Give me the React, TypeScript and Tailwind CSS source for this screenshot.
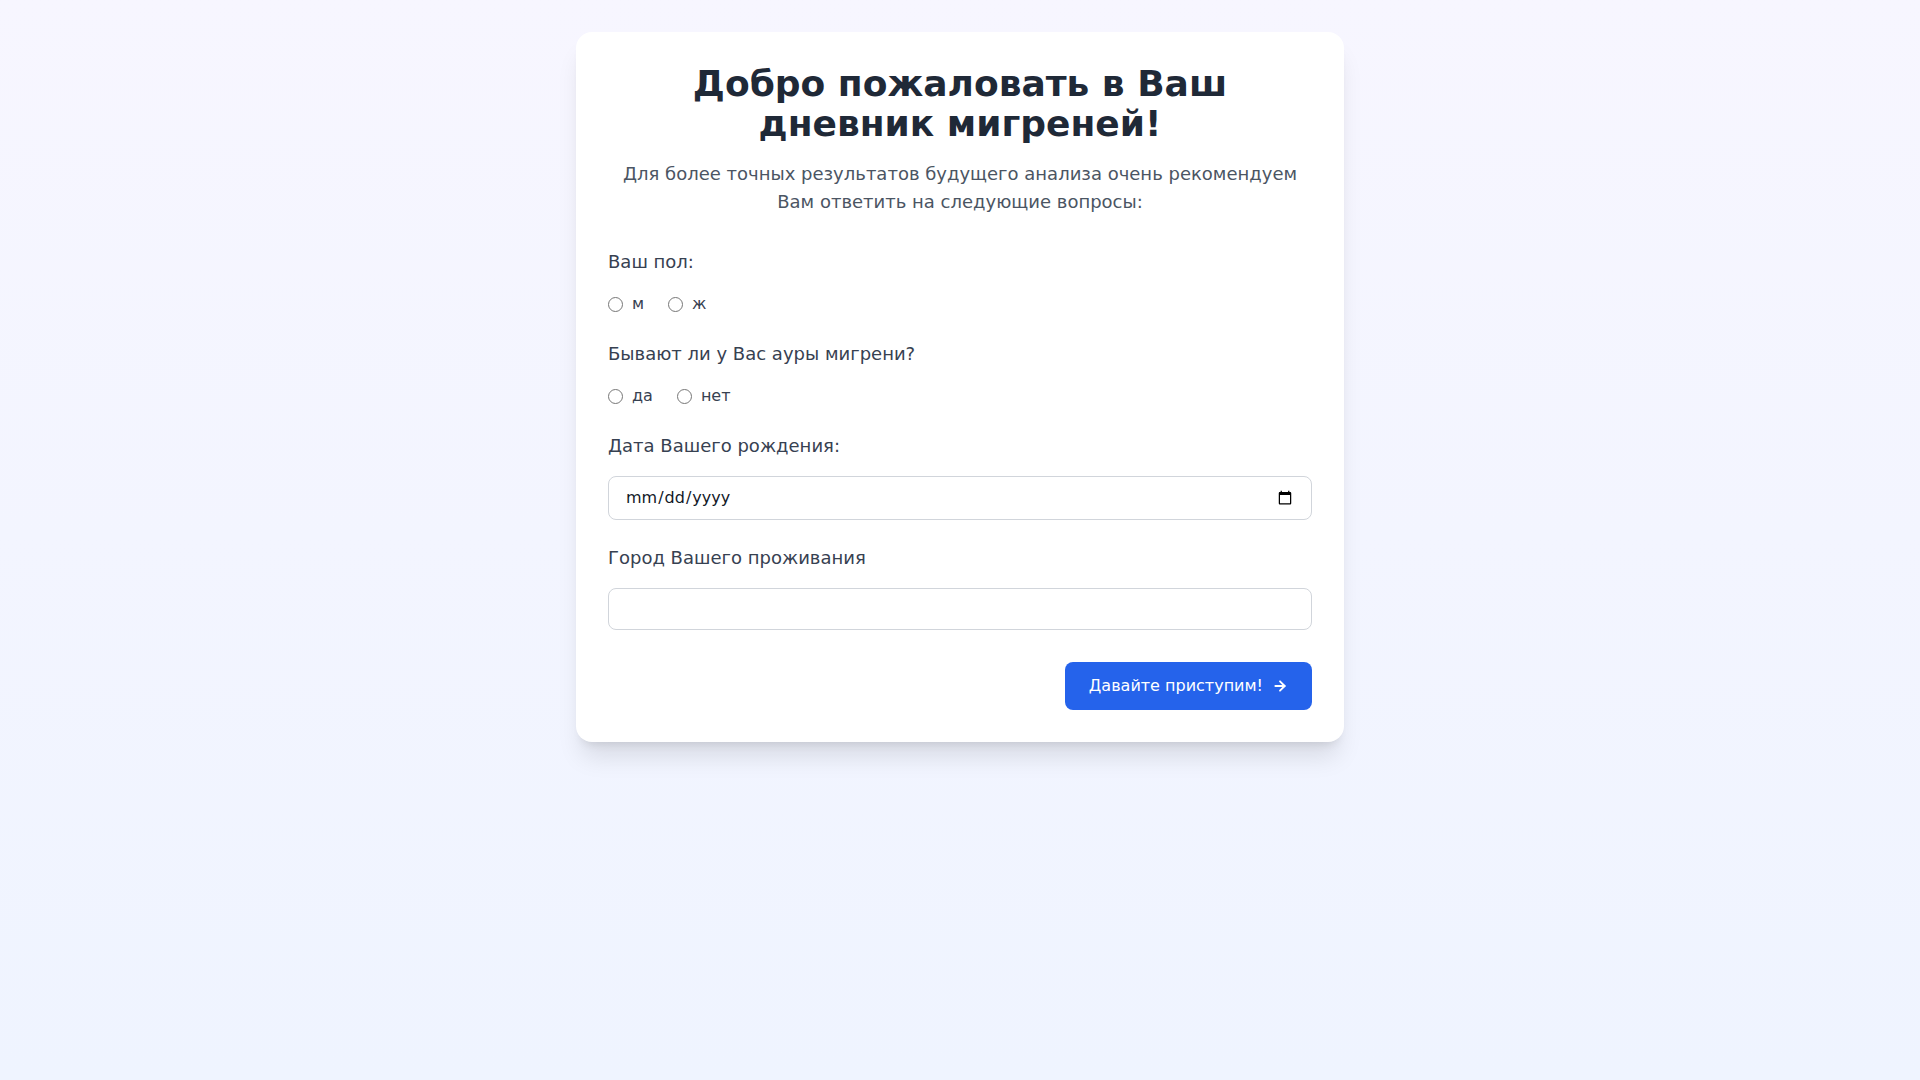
import { ArrowRight } from "lucide-react";

// Анкета первого входа в дневник мигреней
export default function App() {
  return (
    <div className="min-h-screen bg-linear-to-b from-[#f7f6ff] to-[#eff4ff] font-['DejaVu_Sans','Noto_Sans',sans-serif] pt-8">
      <div className="max-w-3xl mx-auto bg-white rounded-2xl shadow-xl p-8">
        <h1 className="text-4xl font-bold text-[#1f2937] text-center mb-4">
          Добро пожаловать в Ваш
          <br />
          дневник мигреней!
        </h1>
        <p className="text-lg text-[#4b5563] text-center mb-8">
          Для более точных результатов будущего анализа очень рекомендуем Вам ответить на следующие вопросы:
        </p>

        <div className="flex flex-col gap-6">
          <div>
            <div className="text-lg text-[#374151] mb-4">Ваш пол:</div>
            <div className="flex items-center gap-6 text-base text-[#374151]">
              <label className="flex items-center gap-[9px]">
                <input type="radio" name="sex" className="w-[15px] h-[15px]" />
                м
              </label>
              <label className="flex items-center gap-[9px]">
                <input type="radio" name="sex" className="w-[15px] h-[15px]" />
                ж
              </label>
            </div>
          </div>

          <div>
            <div className="text-lg text-[#374151] mb-4">Бывают ли у Вас ауры мигрени?</div>
            <div className="flex items-center gap-6 text-base text-[#374151]">
              <label className="flex items-center gap-[9px]">
                <input type="radio" name="aura" className="w-[15px] h-[15px]" />
                да
              </label>
              <label className="flex items-center gap-[9px]">
                <input type="radio" name="aura" className="w-[15px] h-[15px]" />
                нет
              </label>
            </div>
          </div>

          <div>
            <div className="text-lg text-[#374151] mb-4">Дата Вашего рождения:</div>
            <input
              type="date"
              className="w-full h-[44px] px-4 border border-[#d1d5db] rounded-lg text-base text-[#111827]"
            />
          </div>

          <div>
            <div className="text-lg text-[#374151] mb-4">Город Вашего проживания</div>
            <input type="text" className="w-full h-[42px] px-4 border border-[#d1d5db] rounded-lg text-base" />
          </div>
        </div>

        <div className="flex justify-end mt-8">
          <button className="flex items-center gap-[9px] bg-[#2563eb] text-white text-base rounded-lg px-6 py-3">
            Давайте приступим!
            <ArrowRight size={16} strokeWidth={2.75} />
          </button>
        </div>
      </div>
    </div>
  );
}
